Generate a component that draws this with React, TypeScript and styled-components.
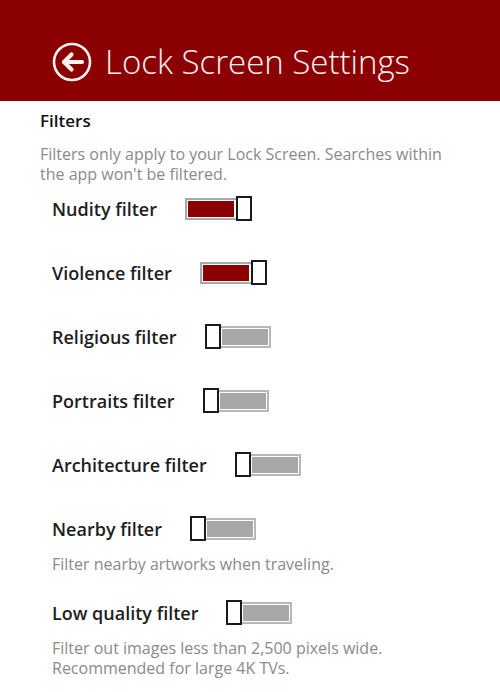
import React from "react";
import styled, { createGlobalStyle } from "styled-components";

const Global = createGlobalStyle`
  html, body { margin: 0; padding: 0; background: #ffffff; }
  body { font-family: "Open Sans", "Noto Sans", sans-serif; }
`;

const Page = styled.div`
  width: 500px;
  min-height: 692px;
  background: #ffffff;
`;

const Header = styled.header`
  height: 101px;
  background: #8b0000;
  display: flex;
  align-items: center;
  padding: 22px 0 0 52px;
  box-sizing: border-box;
  gap: 13px;
`;

const BackButton = styled.button`
  width: 40px;
  height: 40px;
  padding: 0;
  border: none;
  background: transparent;
  display: flex;
  align-items: center;
  justify-content: center;
  cursor: pointer;
`;

const Title = styled.h1`
  margin: 0;
  color: #fdf2f2;
  font-family: "Open Sans", sans-serif;
  font-weight: 300;
  font-size: 33px;
  line-height: 40px;
`;

const Content = styled.main`
  padding: 8px 0 0 40px;
`;

const SectionTitle = styled.h2`
  margin: 0;
  font-family: "Open Sans", sans-serif;
  font-weight: 600;
  font-size: 17px;
  line-height: 24px;
  color: #111111;
`;

const Intro = styled.p`
  margin: 11px 0 0 0;
  width: 430px;
  font-family: "Open Sans", sans-serif;
  font-size: 16px;
  line-height: 20px;
  color: #8a8a8a;
`;

const List = styled.div`
  display: flex;
  flex-direction: column;
  padding: 12px 0 0 12px;
`;

const Item = styled.div<{ $hasDesc: boolean }>`
  display: flex;
  flex-direction: column;
  margin-bottom: ${(p) => (p.$hasDesc ? "26px" : "38px")};
`;

const Row = styled.div`
  display: flex;
  align-items: center;
  height: 26px;
  gap: 28px;
`;

const Label = styled.span`
  font-family: "Open Sans", sans-serif;
  font-weight: 600;
  font-size: 18px;
  color: #1e1e1e;
`;

const Desc = styled.div`
  margin-top: 12px;
  font-family: "Open Sans", sans-serif;
  font-size: 16px;
  line-height: 20px;
  color: #8a8a8a;
`;

const Track = styled.div<{ $on: boolean }>`
  position: relative;
  width: 66px;
  height: 22px;
  box-sizing: border-box;
  border: 2px solid ${(p) => (p.$on ? "#a9a9a9" : "#b8b8b8")};
  padding: 1px;
  background: #ffffff;
  display: flex;
  justify-content: ${(p) => (p.$on ? "flex-start" : "flex-end")};
`;

const Fill = styled.div<{ $on: boolean }>`
  height: 100%;
  width: 46px;
  background: ${(p) => (p.$on ? "#8b0000" : "#a8a8a8")};
`;

const Thumb = styled.div<{ $on: boolean }>`
  position: absolute;
  top: -4px;
  ${(p) => (p.$on ? "right: -3px;" : "left: -2px;")}
  width: 16px;
  height: 25px;
  box-sizing: border-box;
  border: 2px solid #1a1a1a;
  background: #ffffff;
`;

const Toggle: React.FC<{ on: boolean }> = ({ on }) => (
  <Track $on={on} role="switch" aria-checked={on}>
    <Fill $on={on} />
    <Thumb $on={on} />
  </Track>
);

const BackIcon = () => (
  <svg width="40" height="40" viewBox="0 0 40 40">
    <circle cx="20" cy="20" r="18" fill="none" stroke="#fdf2f2" strokeWidth="2.6" />
    <path d="M30 20H12" stroke="#fdf2f2" strokeWidth="4.2" strokeLinecap="round" fill="none" />
    <path d="M19.5 12.5L12 20l7.5 7.5" stroke="#fdf2f2" strokeWidth="4.2" strokeLinecap="round" strokeLinejoin="round" fill="none" />
  </svg>
);

const settings = [
  { label: "Nudity filter", on: true },
  { label: "Violence filter", on: true },
  { label: "Religious filter", on: false },
  { label: "Portraits filter", on: false },
  { label: "Architecture filter", on: false },
  { label: "Nearby filter", on: false, desc: ["Filter nearby artworks when traveling."] },
  {
    label: "Low quality filter",
    on: false,
    desc: ["Filter out images less than 2,500 pixels wide.", "Recommended for large 4K TVs."],
  },
];

export default function App() {
  return (
    <Page>
      <Global />
      <Header>
        <BackButton aria-label="Back">
          <BackIcon />
        </BackButton>
        <Title>Lock Screen Settings</Title>
      </Header>
      <Content>
        <SectionTitle>Filters</SectionTitle>
        <Intro>Filters only apply to your Lock Screen. Searches within the app won't be filtered.</Intro>
        <List>
          {settings.map((s) => (
            <Item key={s.label} $hasDesc={!!s.desc}>
              <Row>
                <Label>{s.label}</Label>
                <Toggle on={s.on} />
              </Row>
              {s.desc && (
                <Desc>
                  {s.desc.map((d) => (
                    <div key={d}>{d}</div>
                  ))}
                </Desc>
              )}
            </Item>
          ))}
        </List>
      </Content>
    </Page>
  );
}
